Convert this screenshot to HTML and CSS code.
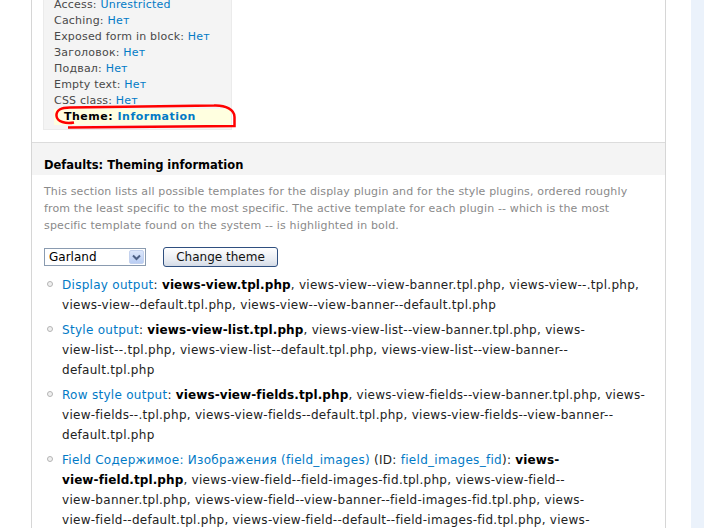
FILE: index.html
```html
<!DOCTYPE html>
<html lang="ru">
<head>
 <meta charset="UTF-8">
 <title>Views: Theming information</title>
 <link rel="stylesheet" href="styles.css">
</head>
<body>
 <div class="page">
  <div class="main">
   <div class="panel">
    <div class="summary">
     <div class="summary-box">
      <div class="summary-row">Access: <a href="#">Unrestricted</a></div>
      <div class="summary-row">Caching: <a href="#">Нет</a></div>
      <div class="summary-row">Exposed form in block: <a href="#">Нет</a></div>
      <div class="summary-row">Заголовок: <a href="#">Нет</a></div>
      <div class="summary-row">Подвал: <a href="#">Нет</a></div>
      <div class="summary-row">Empty text: <a href="#">Нет</a></div>
      <div class="summary-row">CSS class: <a href="#">Нет</a></div>
      <div class="summary-row active">Theme: <a href="#">Information</a></div>
     </div>
    </div>

    <div class="section">
     <div class="section-head">
      <h2>Defaults: Theming information</h2>
     </div>
     <div class="section-body">
      <p class="description">This section lists all possible templates for the display plugin and for the style plugins, ordered roughly from the least specific to the most specific. The active template for each plugin -- which is the most specific template found on the system -- is highlighted in bold.</p>

      <div class="theme-form">
       <div class="select">
        <span class="select-value">Garland</span>
        <span class="select-arrow">
         <svg width="9" height="7" viewBox="0 0 9 7"><path d="M1 1.5 L4.5 5 L8 1.5" fill="none" stroke="#4d6185" stroke-width="2"/></svg>
        </span>
       </div>
       <button class="btn">Change theme</button>
      </div>

      <!-- line breaks follow the original browser's hyphen wrapping -->
      <ul class="templates">
       <li><span class="bullet"></span><div><a href="#">Display output</a>: <strong>views-view.tpl.php</strong>, views-view--view-banner.tpl.php, views-view--.tpl.php,<br>views-view--default.tpl.php, views-view--view-banner--default.tpl.php</div></li>
       <li><span class="bullet"></span><div><a href="#">Style output</a>: <strong>views-view-list.tpl.php</strong>, views-view-list--view-banner.tpl.php, views-<br>view-list--.tpl.php, views-view-list--default.tpl.php, views-view-list--view-banner--<br>default.tpl.php</div></li>
       <li><span class="bullet"></span><div><a href="#">Row style output</a>: <strong>views-view-fields.tpl.php</strong>, views-view-fields--view-banner.tpl.php, views-<br>view-fields--.tpl.php, views-view-fields--default.tpl.php, views-view-fields--view-banner--<br>default.tpl.php</div></li>
       <li><span class="bullet"></span><div><a href="#">Field Содержимое: Изображения (field_images)</a> (ID: <a href="#">field_images_fid</a>): <strong>views-<br>view-field.tpl.php</strong>, views-view-field--field-images-fid.tpl.php, views-view-field--<br>view-banner.tpl.php, views-view-field--view-banner--field-images-fid.tpl.php, views-<br>view-field--default.tpl.php, views-view-field--default--field-images-fid.tpl.php, views-<br>view-field--view-banner--default.tpl.php</div></li>
      </ul>
     </div>
    </div>
   </div>
  </div>
  <div class="sidebar"></div>
 </div>

 <!-- hand-drawn marker round the Theme row -->
 <svg class="marker" width="260" height="140" viewBox="0 0 260 140">
  <path d="M74 122.5 C66 124, 57 122, 56.5 116 C56 110, 61 107.5, 70 107.5 L214 105.5 C226 105, 234.5 110, 234.5 117 L234.5 126 L68 127.5" fill="none" stroke="#f00" stroke-width="2.5"/>
 </svg>
</body>
</html>
```

FILE: styles.css
```css
body {
 margin: 0;
 font-family: "DejaVu Sans", Verdana, sans-serif;
 background: #fff;
 color: #222;
 overflow: hidden;
}

a {
 color: #027ac6;
 text-decoration: none;
}

.page {
 display: flex;
 height: 528px;
 overflow: hidden;
}

.main {
 width: 691px;
 flex-shrink: 0;
 padding-left: 31px;
 box-sizing: border-box;
}

.sidebar {
 flex: 1;
 background: #ebf2fb;
}

.panel {
 width: 635px;
 height: 100%;
 box-sizing: border-box;
 border-left: 1px solid #d6d6d6;
 border-right: 1px solid #d6d6d6;
 overflow: hidden;
}

/* summary box at the top */
.summary {
 padding: 0 11px 12px;
}

.summary-box {
 width: 189px;
 box-sizing: border-box;
 margin-top: -3px;
 padding: 0 0 4px 10px;
 background: #f4f4f4;
 border: 1px solid #ebebeb;
 border-top: none;
 font-size: 11px;
 line-height: 16px;
 letter-spacing: 0.2px;
 color: #494949;
}

.summary-row.active {
 padding-left: 10px;
 background: #ffffe0;
 font-weight: bold;
 letter-spacing: 0.5px;
 color: #000;
}

/* theming section */
.section {
 border-top: 1px solid #dcdcdc;
}

.section-head {
 background: #f4f4f4;
 padding: 14px 12px 2px;
}

.section-head h2 {
 margin: 0;
 font-size: 11.5px;
 line-height: 16px;
 color: #000;
}

.section-body {
 padding: 0 14px 0 12px;
}

.description {
 margin: 8px 0 0;
 font-size: 11px;
 line-height: 17px;
 letter-spacing: 0.15px;
 color: #8a8a8a;
}

.theme-form {
 display: flex;
 align-items: center;
 gap: 17px;
 margin-top: 13px;
}

.select {
 display: flex;
 align-items: center;
 width: 102px;
 height: 18px;
 box-sizing: border-box;
 border: 1px solid #8a9bb0;
 font-size: 12px;
 color: #000;
}

.select-value {
 flex: 1;
 padding-left: 4px;
}

.select-arrow {
 display: flex;
 align-items: center;
 justify-content: center;
 width: 15px;
 height: 14px;
 margin-right: 1px;
 background: linear-gradient(#dce7fb, #b9cdf3);
 border: 1px solid #c4d2ee;
 box-sizing: border-box;
 border-radius: 2px;
}

.btn {
 width: 115px;
 height: 20px;
 padding: 0;
 font-family: "DejaVu Sans", Verdana, sans-serif;
 font-size: 12px;
 color: #111;
 background: linear-gradient(#ffffff, #e6eaf1 70%, #d4dbe6);
 border: 1px solid #2f4f7f;
 border-radius: 3px;
}

.templates {
 list-style: none;
 margin: 8px 0 0;
 padding: 0;
 font-size: 12px;
 line-height: 20px;
 letter-spacing: 0.28px;
 white-space: nowrap;
}

.templates li {
 display: flex;
 margin-bottom: 5px;
}

.bullet {
 flex-shrink: 0;
 width: 4px;
 height: 4px;
 margin: 6px 9px 0 3px;
 border: 1px solid #b4b4b4;
 border-radius: 50%;
 background: #f0f0f0;
}

.templates strong {
 color: #000;
 letter-spacing: 0.1px;
}

.marker {
 position: absolute;
 left: 0;
 top: 0;
}
```
